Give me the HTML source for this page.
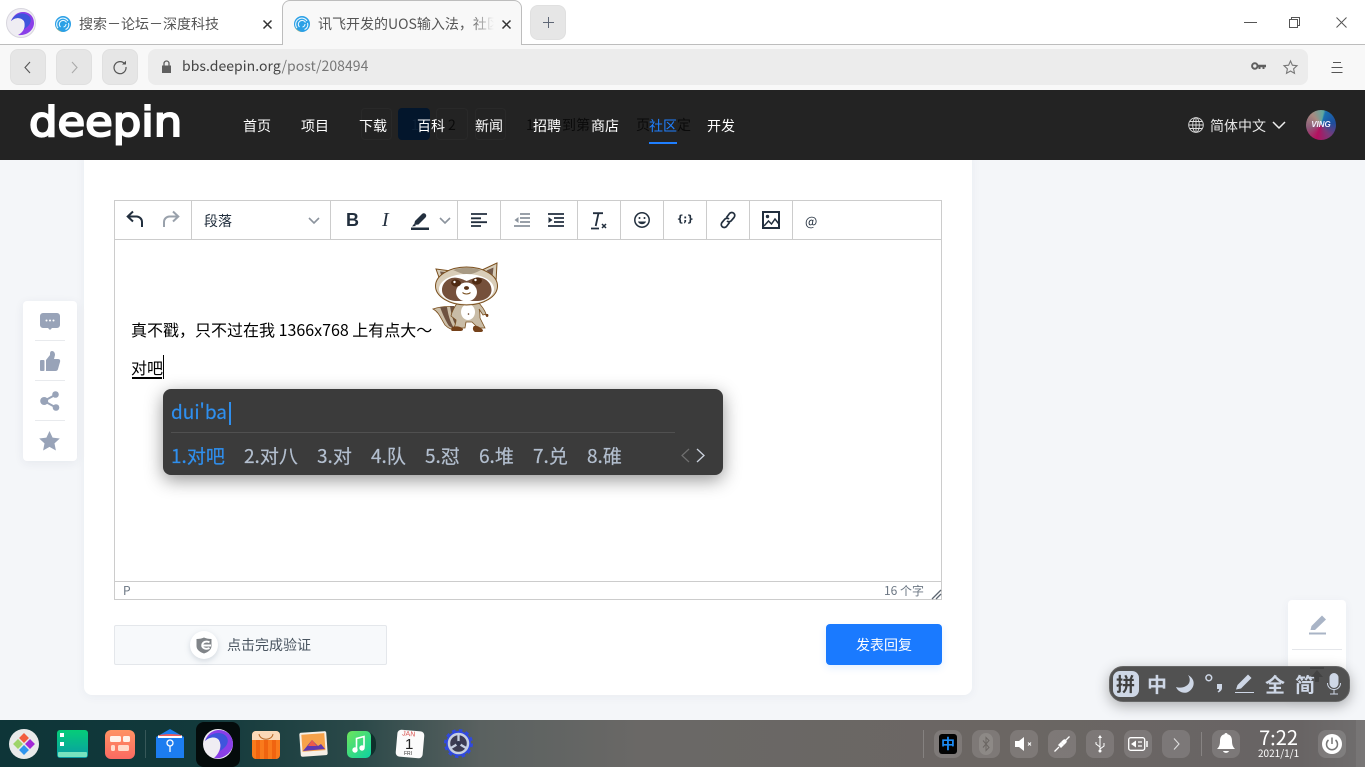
<!DOCTYPE html>
<html lang="zh"><head><meta charset="utf-8"><title>deepin</title>
<style>
*{box-sizing:border-box}
html,body{margin:0;padding:0;width:1365px;height:767px;overflow:hidden;background:#f4f6f9;font-family:"Noto Sans CJK SC","Liberation Sans",sans-serif}
.a{position:absolute}
.t{position:absolute;white-space:nowrap;line-height:20px}
svg{position:absolute;overflow:visible}
.btn{position:absolute;top:49px;width:36px;height:36px;background:#e6e6e6;border:1px solid #e0e0e0;border-radius:8px}
.sep{position:absolute;top:200px;width:1px;height:40px;background:#ccc}
.tb{position:absolute;top:730px;width:28px;height:28px;background:rgba(255,255,255,.13);border-radius:8px}
.nav{position:absolute;top:116px;color:#fff;font-size:14px;line-height:20px;white-space:nowrap}
.cand{position:absolute;top:443px;font-size:19px;line-height:26px;color:#b3bfcf;white-space:nowrap;-webkit-text-stroke:.2px currentColor}
</style></head><body>

<!-- title bar -->
<div class="a" style="left:0;top:0;width:1365px;height:45px;background:#fff;border-bottom:1px solid #bdbdbd"></div>
<!-- browser logo -->
<svg style="left:6px;top:8px" width="30" height="30" viewBox="0 0 30 30"><circle cx="15" cy="15" r="14.500" fill="#efedf3" stroke="#d8d6de"/><path d="M5 13C9 9 15 9 18 13c2 5 0 11-6 14 9 1 16-5 16-12C28 8 23 4 17 4 11 4 7 8 5 13z" fill="#8a3fe8"/><path d="M5 13C9 9 15 9 18 13c1 3 1 5 0 8 6-3 8-8 6-12-4-5-14-6-19 4z" fill="#3f55dc"/></svg>
<!-- tab 1 -->
<svg style="left:55px;top:16px" width="16" height="16" viewBox="0 0 16 16"><circle cx="8" cy="8" r="8" fill="#2ba0e6"/><path d="M3 12a6 6 0 0 1 1-8.500 6 6 0 0 1 9 1.500M5.500 11a3.800 3.800 0 0 1 0-5.500 3.800 3.800 0 0 1 6 1M13.500 7a5 5 0 0 1-3 6.500M11 8a3 3 0 0 1-2.500 3" fill="none" stroke="#e8f6ff" stroke-width="1.100"/><path d="M1 11c1 3 4 5 7 5-3-.5-5-2-7-5z" fill="#f3c64a"/></svg>
<div class="t" style="left:79px;top:14px;font-size:14px;color:#555">搜索－论坛－深度科技</div>
<svg style="left:263px;top:20px" width="9" height="9"><path d="M.5.5l8 8M8.500 .5l-8 8" stroke="#333" stroke-width="1.500"/></svg>
<!-- active tab -->
<div class="a" style="left:282px;top:0;width:240px;height:46px;background:#f8f8f8;border:1px solid #bdbdbd;border-bottom:none;border-radius:8px 8px 0 0"></div>
<svg style="left:294px;top:16px" width="16" height="16" viewBox="0 0 16 16"><circle cx="8" cy="8" r="8" fill="#2ba0e6"/><path d="M3 12a6 6 0 0 1 1-8.500 6 6 0 0 1 9 1.500M5.500 11a3.800 3.800 0 0 1 0-5.500 3.800 3.800 0 0 1 6 1M13.500 7a5 5 0 0 1-3 6.500M11 8a3 3 0 0 1-2.500 3" fill="none" stroke="#e8f6ff" stroke-width="1.100"/><path d="M1 11c1 3 4 5 7 5-3-.5-5-2-7-5z" fill="#f3c64a"/></svg>
<div class="a" style="left:318px;top:14px;width:176px;height:20px;overflow:hidden"><div class="t" style="left:0;top:0;font-size:14px;color:#555">讯飞开发的UOS输入法，社区</div><div class="a" style="right:0;top:0;width:24px;height:20px;background:linear-gradient(90deg,rgba(248,248,248,0),#f8f8f8)"></div></div>
<svg style="left:502px;top:20px" width="9" height="9"><path d="M.5.5l8 8M8.500 .5l-8 8" stroke="#333" stroke-width="1.500"/></svg>
<!-- new tab -->
<div class="a" style="left:530px;top:5px;width:36px;height:35px;background:#e6e6e6;border:1px solid #e0e0e0;border-radius:8px"></div>
<svg style="left:543px;top:17px" width="11" height="11"><path d="M5.500 0v11M0 5.500h11" stroke="#5e6675" stroke-width="1"/></svg>
<!-- window controls -->
<svg style="left:1244px;top:22px" width="13" height="2"><path d="M0 .5h13" stroke="#555"/></svg>
<svg style="left:1289px;top:17px" width="11" height="11"><path d="M.5 2.500h8v8h-8zM2.500 2.500V.5h8v8h-2" fill="none" stroke="#555"/></svg>
<svg style="left:1336px;top:17px" width="11" height="11"><path d="M.5.500l10 10M10.500.500l-10 10" stroke="#555"/></svg>

<!-- toolbar -->
<div class="a" style="left:0;top:45px;width:1365px;height:45px;background:#f8f8f8"></div>
<div class="btn" style="left:10px"></div>
<svg style="left:24px;top:61px" width="7" height="13"><path d="M6 1L1 6.500 6 12" fill="none" stroke="#555" stroke-width="1.100"/></svg>
<div class="btn" style="left:56px"></div>
<svg style="left:71px;top:61px" width="7" height="13"><path d="M1 1l5 5.500L1 12" fill="none" stroke="#aaa" stroke-width="1.100"/></svg>
<div class="btn" style="left:102px"></div>
<svg style="left:113px;top:60px" width="14" height="14" viewBox="0 0 14 14"><path d="M11.800 4A6 6 0 1 0 13 7" fill="none" stroke="#555" stroke-width="1.200"/><path d="M9 4.500h4V.8z" fill="#555"/></svg>
<div class="a" style="left:148px;top:49px;width:1160px;height:36px;background:#ececec;border-radius:8px"></div>
<svg style="left:162px;top:60px" width="9" height="13" viewBox="0 0 9 13"><path d="M0 5.500h9V13H0z" fill="#5f5f5f"/><path d="M2 6V3.500a2.500 2.500 0 0 1 5 0V6" fill="none" stroke="#5f5f5f" stroke-width="1.300"/></svg>
<div class="t" style="left:182px;top:56px;font-size:14px;color:#444;letter-spacing:.04px">bbs.deepin.org<span style="color:#777">/post/208494</span></div>
<svg style="left:1251px;top:62px" width="15" height="9" viewBox="0 0 15 9"><circle cx="3.800" cy="4" r="2.700" fill="none" stroke="#5f5f5f" stroke-width="2"/><path d="M6 2.800h9v2.400h-1.500V7h-2V5.200H9.500V7h-2V5.200H6z" fill="#5f5f5f"/></svg>
<svg style="left:1283px;top:60px" width="15" height="15" viewBox="0 0 15 15"><path d="M7.500 1l1.900 4.200 4.600.5-3.400 3.100.9 4.500-4-2.300-4 2.300.9-4.500L1 5.700l4.600-.5z" fill="none" stroke="#777" stroke-width="1.100"/></svg>
<svg style="left:1331px;top:62px" width="12" height="12"><path d="M2 .5h8M.5 5.500h11M.5 10.500h11" stroke="#555"/></svg>

<!-- page card -->
<div class="a" style="left:84px;top:150px;width:888px;height:545px;background:#fff;border-radius:8px;box-shadow:0 2px 10px rgba(40,60,90,.05)"></div>

<!-- site header -->
<div class="a" style="left:0;top:90px;width:1365px;height:70px;background:#232323"></div>
<div class="a" style="left:398px;top:108px;width:32px;height:32px;border-radius:4px;background:#03162c"></div>
<div class="a" style="left:361px;top:108px;width:31px;height:32px;border:1px solid #292929;border-radius:4px"></div>
<div class="a" style="left:436px;top:108px;width:32px;height:32px;border:1px solid #292929;border-radius:4px"></div>
<div class="a" style="left:475px;top:108px;width:31px;height:32px;border:1px solid #292929;border-radius:4px"></div>
<div class="t" style="left:411px;top:115px;font-size:14px;color:#0c2036">1</div>
<div class="t" style="left:448px;top:115px;font-size:14px;color:#0a0a0a">2</div>
<div class="t" style="left:526px;top:115px;font-size:14px;color:#0a0a0a">1</div>
<div class="t" style="left:562px;top:115px;font-size:14px;color:#0a0a0a">到第</div>
<div class="t" style="left:636px;top:115px;font-size:14px;color:#0a0a0a">页</div>
<div class="t" style="left:677px;top:115px;font-size:14px;color:#0a0a0a">定</div>
<div class="t" style="left:29px;top:97px;font-size:41px;line-height:50px;color:#fff;font-family:'DejaVu Sans',sans-serif;-webkit-text-stroke:2px #fff;transform-origin:0 50%;transform:scaleX(1.095)">deepin</div>
<div class="nav" style="left:243px">首页</div>
<div class="nav" style="left:301px">项目</div>
<div class="nav" style="left:359px">下载</div>
<div class="nav" style="left:417px">百科</div>
<div class="nav" style="left:475px">新闻</div>
<div class="nav" style="left:533px">招聘</div>
<div class="nav" style="left:591px">商店</div>
<div class="nav" style="left:649px;color:#1f7fff">社区</div>
<div class="nav" style="left:707px">开发</div>
<div class="a" style="left:649px;top:142px;width:28px;height:2px;background:#1f7fff"></div>
<svg style="left:1188px;top:117px" width="16" height="16" viewBox="0 0 16 16" fill="none" stroke="#ddd" stroke-width=".9"><circle cx="8" cy="8" r="7.300"/><ellipse cx="8" cy="8" rx="3.300" ry="7.300"/><path d="M8 .7v14.600M.7 8h14.600M1.800 4.500h12.400M1.800 11.500h12.400"/></svg>
<div class="t" style="left:1210px;top:116px;font-size:14px;color:#e8e8e8">简体中文</div>
<svg style="left:1272px;top:121px" width="14" height="9"><path d="M1 1l6 6 6-6" fill="none" stroke="#eee" stroke-width="1.500"/></svg>
<div class="a" style="left:1306px;top:110px;width:30px;height:30px;border-radius:50%;background:conic-gradient(from 20deg,#1a6fb0,#1d4e9e 60deg,#7a3a7a 120deg,#b5105f 180deg,#8c5d7a 240deg,#a88a80 300deg,#5fa8a0 350deg,#1a6fb0)"></div>
<div class="t" style="left:1306px;top:115px;width:30px;text-align:center;font-size:8px;font-style:italic;font-weight:700;color:#f3eefc;font-family:'Liberation Sans',sans-serif">VING</div>

<!-- editor -->
<div class="a" style="left:114px;top:200px;width:828px;height:400px;background:#fff;border:1px solid #ccc"></div>
<div class="a" style="left:114px;top:239px;width:828px;height:1px;background:#ccc"></div>
<div class="a" style="left:114px;top:581px;width:828px;height:1px;background:#ccc"></div>
<div class="sep" style="left:191px"></div><div class="sep" style="left:330px"></div><div class="sep" style="left:457px"></div><div class="sep" style="left:500px"></div><div class="sep" style="left:577px"></div><div class="sep" style="left:620px"></div><div class="sep" style="left:663px"></div><div class="sep" style="left:706px"></div><div class="sep" style="left:749px"></div><div class="sep" style="left:792px"></div>

<svg style="left:126px;top:210px" width="18" height="20" viewBox="0 0 18 20"><path d="M7 1.500L1.700 6.500 7 11.500" fill="none" stroke="#222f3e" stroke-width="2"/><path d="M2 6.500h8.500a5.500 5.500 0 0 1 5.500 5.500v5" fill="none" stroke="#222f3e" stroke-width="2"/></svg>
<svg style="left:162px;top:210px" width="18" height="20" viewBox="0 0 18 20"><path d="M11 1.500l5.300 5-5.300 5" fill="none" stroke="#99a1ab" stroke-width="2"/><path d="M16 6.500H7.500A5.500 5.500 0 0 0 2 12v5" fill="none" stroke="#99a1ab" stroke-width="2"/></svg>
<div class="t" style="left:204px;top:211px;font-size:14px;color:#222f3e">段落</div>
<svg style="left:308px;top:217px" width="12" height="8"><path d="M1 1l5 5 5-5" fill="none" stroke="#8b939d" stroke-width="1.600"/></svg>
<div class="t" style="left:346px;top:210px;font-size:18px;font-weight:700;color:#222f3e;font-family:'Liberation Sans',sans-serif">B</div>
<div class="t" style="left:382px;top:210px;font-size:20px;font-style:italic;color:#222f3e;font-family:'Liberation Serif',serif">I</div>
<svg style="left:411px;top:212px" width="18" height="18" viewBox="0 0 18 18"><path d="M0 15.500h18V18H0z" fill="#222f3e"/><path d="M3 13l1-4 7-7c1-1 2.500-1 3.500 0s1 2.500 0 3.500l-7 7z" fill="#222f3e"/><path d="M1 14.500L3 12l2 2z" fill="#222f3e"/></svg>
<svg style="left:439px;top:217px" width="12" height="8"><path d="M1 1l5 5 5-5" fill="none" stroke="#8b939d" stroke-width="1.600"/></svg>
<svg style="left:471px;top:213px" width="16" height="14"><path d="M0 1h16M0 5.300h10M0 9.200h16M0 13h10" stroke="#222f3e" stroke-width="1.800"/></svg>
<svg style="left:514px;top:213px" width="16" height="14"><path d="M6 1h10M6 5h10M6 9h10M0 13h16" stroke="#8b939d" stroke-width="1.700"/><path d="M4.500 4L.5 7l4 3z" fill="#8b939d"/></svg>
<svg style="left:548px;top:213px" width="16" height="14"><path d="M0 1h16M6 5h10M6 9h10M0 13h16" stroke="#222f3e" stroke-width="1.700"/><path d="M.5 4l4 3-4 3z" fill="#222f3e"/></svg>
<svg style="left:591px;top:212px" width="17" height="18" viewBox="0 0 17 18"><path d="M2 1.200h10M7.500 1.200L4.700 14M0 16.500h8" stroke="#222f3e" stroke-width="1.800" fill="none"/><path d="M11 12l4 4M15 12l-4 4" stroke="#222f3e" stroke-width="1.500"/></svg>
<svg style="left:634px;top:212px" width="16" height="16" viewBox="0 0 16 16" fill="none" stroke="#222f3e" stroke-width="1.500"><circle cx="8" cy="8" r="7.200"/><path d="M4 9.500c1 3.500 7 3.500 8 0z" fill="#222f3e" stroke="none"/><circle cx="5.500" cy="6" r="1" fill="#222f3e" stroke="none"/><circle cx="10.500" cy="6" r="1" fill="#222f3e" stroke="none"/></svg>
<div class="t" style="left:676px;top:210px;width:18px;text-align:center;font-size:10px;letter-spacing:-.5px;font-weight:700;color:#222f3e;font-family:'DejaVu Sans',sans-serif">{;}</div>
<svg style="left:719px;top:211px" width="18" height="18" viewBox="0 0 18 18" fill="none" stroke="#222f3e" stroke-width="1.700"><path d="M7.500 6.500l3-4a3 3 0 0 1 4.500 4l-3 3.500c-1 1-3 1-4 0"/><path d="M10.500 11.500l-3 4a3 3 0 0 1-4.500-4l3-3.500c1-1 3-1 4 0"/></svg>
<svg style="left:762px;top:211px" width="18" height="18" viewBox="0 0 18 18"><rect x="1" y="1" width="16" height="16" fill="none" stroke="#222f3e" stroke-width="2"/><circle cx="5.500" cy="5.500" r="1.700" fill="#222f3e"/><path d="M2 15l4.500-5 3 3 3.500-5 3.500 4.500" fill="none" stroke="#222f3e" stroke-width="1.500"/></svg>
<div class="t" style="left:805px;top:211px;font-size:13px;color:#222f3e">@</div>

<div class="t" style="left:131px;top:319px;font-size:16px;color:#000;white-space:pre">真不戳，只不过在我 1366x768 上有点大～</div>
<div class="t" style="left:131px;top:357px;font-size:16px;color:#000">对吧</div>
<div class="a" style="left:132px;top:377px;width:30px;height:2px;background:#000"></div>
<div class="a" style="left:163px;top:355px;width:1px;height:24px;background:#000"></div>

<!-- raccoon -->
<svg style="left:433px;top:262px" width="66" height="71" viewBox="0 0 66 71">
<path d="M23 45C15 44 6 45 0 47c6 3 8 10 12 16 4 4 8 6 13 4 2-6 1-14-2-22z" fill="#cbbda6" stroke="#7a4f1e" stroke-width=".8"/>
<path d="M7 45c2 5 4 11 9 19 2 1 3 2 5 2-4-6-6-14-7-21zM17 44c1 6 2 12 5 18l2-1c-1-6-1-12-3-17z" fill="#6e5240"/>
<path d="M25 40c-3 4-6 9-7 14l5 4c0 3-1 5-2 8l11 0 1-6 6 0 6 6h7l-5-10c0-4 0-7-1-9l4 6 3-1c-2-6-6-10-9-13z" fill="#c9bca6" stroke="#7a4f1e" stroke-width=".8"/>
<ellipse cx="35" cy="50" rx="7" ry="8" fill="#fff"/><circle cx="35.500" cy="52" r=".8" fill="#5a3216"/>
<path d="M19 65c3-1 9-1 11 2 0 1.500-1 2-3 2h-8c-1 0-1-3 0-4zM41 64c3-1 6 1 9 4 0 1.500-1 2-2 2h-6c-2-1-3-4-1-6z" fill="#75421b"/>
<path d="M52 52c1 2 1 3 2 3s2-1 1-3z" fill="#75421b"/>
<path d="M3 7l15 2-10 12z" fill="#d7cdb9" stroke="#7a4f1e"/><path d="M7 9.500l6 .5-4 6z" fill="#73594a"/>
<path d="M64 1L49 8l14 12z" fill="#d7cdb9" stroke="#7a4f1e"/><path d="M60.500 5.500l-7 3 6 6z" fill="#73594a"/>
<ellipse cx="33.500" cy="24" rx="31" ry="19" fill="#d9cdb8" stroke="#7a4f1e"/>
<path d="M20 8c8-3 20-3 28 0-4 2-8 4-14 5-5-1-9-3-14-5z" fill="#a89a84"/>
<ellipse cx="33.500" cy="27" rx="27.500" ry="15" fill="#fff"/>
<path d="M9 28c0-8 8-14 16-12 5 1 8 3 8.500 3 1 0 4-2 9-3 8-2 16 4 16 12 0 7-7 11-15 11H24c-8 0-15-4-15-11z" fill="#75503b"/>
<ellipse cx="33.500" cy="30" rx="10.500" ry="9.500" fill="#fff"/>
<ellipse cx="23" cy="21" rx="5" ry="3.500" fill="#4f2a12" transform="rotate(10 23 21)"/><ellipse cx="44" cy="19" rx="5" ry="3.500" fill="#4f2a12" transform="rotate(-10 44 19)"/>
<circle cx="21.500" cy="20" r="1.200" fill="#fff"/><circle cx="42.500" cy="18" r="1.200" fill="#fff"/>
<ellipse cx="33.500" cy="26" rx="2.500" ry="1.900" fill="#5a3216"/>
<path d="M29.500 30.500c2 2 6 2 8 0" fill="none" stroke="#7a4f1e"/>
</svg>

<!-- status bar of editor -->
<div class="t" style="left:123px;top:582px;font-size:12px;line-height:18px;color:#6b7683">P</div>
<div class="t" style="left:884px;top:582px;font-size:12px;line-height:18px;color:#6b7683">16 个字</div>
<svg style="left:932px;top:590px" width="9" height="9"><path d="M0 9L9 0M4 9l5-5" stroke="#5d6671" stroke-width="1.300"/></svg>

<!-- captcha -->
<div class="a" style="left:114px;top:625px;width:273px;height:40px;background:#f7f9fb;border:1px solid #e4e7eb;border-radius:2px"></div>
<div class="a" style="left:190px;top:631px;width:28px;height:28px;background:#fff;border-radius:50%;box-shadow:0 2px 6px rgba(100,120,140,.25)"></div>
<svg style="left:196px;top:637px" width="16" height="17" viewBox="0 0 16 17"><path d="M.5 2C3.500 2 6 1.500 8 .5c2 1 4.500 1.500 7.500 1.500v7c0 3.500-3 6-7.500 7.500C3.500 15 .5 12.500.5 9z" fill="#808488"/><path d="M6.500 8.500h8.500M13.500 5.300C10.500 3.700 6.800 4.700 6.200 8c-.3 3.200 3.800 4.800 7.300 3" fill="none" stroke="#fff" stroke-width="1.900"/></svg>
<div class="t" style="left:227px;top:635px;font-size:14px;color:#4a5560">点击完成验证</div>

<!-- submit -->
<div class="a" style="left:826px;top:624px;width:116px;height:41px;background:#1a7aff;border-radius:4px;box-shadow:0 3px 8px rgba(26,122,255,.12)"></div>
<div class="t" style="left:826px;top:635px;width:116px;text-align:center;font-size:14px;color:#fff">发表回复</div>

<!-- left float -->
<div class="a" style="left:23px;top:301px;width:54px;height:160px;background:#fff;border-radius:4px;box-shadow:0 2px 10px rgba(40,60,90,.07)"></div>
<div class="a" style="left:35px;top:340px;width:30px;height:1px;background:#e8eaed"></div>
<div class="a" style="left:35px;top:380px;width:30px;height:1px;background:#e8eaed"></div>
<div class="a" style="left:35px;top:420px;width:30px;height:1px;background:#e8eaed"></div>
<svg style="left:40px;top:313px" width="20" height="17" viewBox="0 0 20 17"><path d="M3 0h14a3 3 0 0 1 3 3v9a3 3 0 0 1-3 3h-5l-2 2-2-2H3a3 3 0 0 1-3-3V3a3 3 0 0 1 3-3z" fill="#98a3b8"/><circle cx="6.500" cy="7.500" r="1" fill="#fff"/><circle cx="10" cy="7.500" r="1" fill="#fff"/><circle cx="13.500" cy="7.500" r="1" fill="#fff"/></svg>
<svg style="left:40px;top:351px" width="20" height="20" viewBox="0 0 20 20"><rect x="0" y="9" width="4.500" height="11" rx="1" fill="#98a3b8"/><path d="M6 9l4-5c0-2 0-4 2-4s3 2 3 4l-1 4h4c2 0 2.500 1.500 2 3l-2 7c-.3 1.300-1.200 2-2.500 2H6z" fill="#98a3b8"/></svg>
<svg style="left:40px;top:391px" width="20" height="20" viewBox="0 0 20 20"><path d="M15 4L4 10l11 6" fill="none" stroke="#98a3b8" stroke-width="2"/><circle cx="15.500" cy="3.500" r="3.300" fill="#98a3b8"/><circle cx="4.200" cy="10" r="4" fill="#98a3b8"/><circle cx="16" cy="16.500" r="3.300" fill="#98a3b8"/></svg>
<svg style="left:39px;top:431px" width="21" height="20" viewBox="0 0 21 20"><path d="M10.500 0l3.100 6.600 7.200.9-5.300 4.900 1.400 7.100-6.400-3.600-6.400 3.600 1.400-7.100L.2 7.500l7.200-.9z" fill="#98a3b8"/></svg>

<!-- right float -->
<div class="a" style="left:1288px;top:600px;width:58px;height:100px;background:#fff;border-radius:4px;box-shadow:0 2px 10px rgba(40,60,90,.05)"></div>
<div class="a" style="left:1292px;top:649px;width:50px;height:1px;background:#e4e6ea"></div>
<svg style="left:1309px;top:615px" width="18" height="20" viewBox="0 0 18 20"><path d="M0 17.500h17V19.500H0z" fill="#a9b4c6"/><path d="M1.500 15l1-4L13 .5 17 4.500 6 15z" fill="#a9b4c6"/></svg>

<!-- IME candidate -->
<div class="a" style="left:163px;top:389px;width:560px;height:86px;background:#3b3b3b;border-radius:8px;box-shadow:0 5px 18px rgba(0,0,0,.42)"></div>
<div class="t" style="left:171px;top:399px;font-size:19px;line-height:26px;color:#2f8fee;-webkit-text-stroke:.2px #2f8fee">dui'ba</div>
<div class="a" style="left:229px;top:402px;width:1.500px;height:23px;background:#2f8fee"></div>
<div class="a" style="left:171px;top:432px;width:504px;height:1px;background:#505050"></div>
<div class="cand" style="left:171px;color:#2f8fee">1.对吧</div>
<div class="cand" style="left:244px">2.对八</div>
<div class="cand" style="left:317px">3.对</div>
<div class="cand" style="left:371px">4.队</div>
<div class="cand" style="left:425px">5.怼</div>
<div class="cand" style="left:479px">6.堆</div>
<div class="cand" style="left:533px">7.兑</div>
<div class="cand" style="left:587px">8.碓</div>
<svg style="left:681px;top:448px" width="9" height="15"><path d="M8 1L1 7.500 8 14" fill="none" stroke="#6f6f6f" stroke-width="1.200"/></svg>
<svg style="left:696px;top:448px" width="9" height="15"><path d="M1 1l7 6.500L1 14" fill="none" stroke="#ccd3de" stroke-width="1.300"/></svg>

<!-- IME status -->
<div class="a" style="left:1109px;top:666px;width:241px;height:36px;background:rgba(72,72,72,.95);border:1px solid #666;border-radius:14px;box-shadow:0 4px 14px rgba(0,0,0,.3)"></div>
<div class="a" style="left:1113px;top:671px;width:26px;height:26px;background:#ced7e6;border-radius:7px"></div>
<div class="t" style="left:1116px;top:674px;font-size:19px;font-weight:700;color:#3e3e3e;line-height:20px">拼</div>
<div class="t" style="left:1147px;top:674px;font-size:20px;font-weight:700;color:#ced7e6;line-height:20px">中</div>
<svg style="left:1176px;top:675px" width="19" height="19" viewBox="0 0 19 19"><path d="M12 0c3 4 2 9-2 11-3 2-7 2-10 1 2 5 8 7 12 5 6-3 9-12 0-17z" fill="#ced7e6"/></svg>
<svg style="left:1205px;top:674px" width="20" height="20" viewBox="0 0 20 20"><circle cx="3.800" cy="3.800" r="2.900" fill="none" stroke="#ced7e6" stroke-width="1.500"/><path d="M12 10h5v4c0 2-1.500 3.500-3.500 4.500l-1-1c1-.5 1.500-1 1.500-2.500H12z" fill="#ced7e6"/></svg>
<svg style="left:1235px;top:674px" width="19" height="19" viewBox="0 0 19 19"><path d="M0 18h19v1H0z" fill="#ced7e6"/><path d="M1 15.500l1.500-4.500L13 .5 16.500 4 6 14.500z" fill="#ced7e6"/></svg>
<div class="t" style="left:1265px;top:674px;font-size:20px;font-weight:700;color:#ced7e6;line-height:20px">全</div>
<div class="t" style="left:1295px;top:674px;font-size:20px;font-weight:700;color:#ced7e6;line-height:20px">简</div>
<svg style="left:1327px;top:673px" width="14" height="22" viewBox="0 0 14 22"><rect x="2.500" y="0" width="9" height="15" rx="4.500" fill="#ced7e6"/><path d="M.5 10c0 4 3 6.500 6.500 6.500s6.500-2.500 6.500-6.500M7 16.500V21M3 21h8" fill="none" stroke="#ced7e6" stroke-width="1"/></svg>
<svg style="left:1309px;top:666px" width="16" height="17" viewBox="0 0 16 17"><path d="M1 1h14v2H1zM8 4l6 7H10v5H6v-5H2z" fill="#3e3e3e" opacity=".75"/></svg>

<!-- dock -->
<div class="a" style="left:0;top:720px;width:1365px;height:47px;background:linear-gradient(90deg,#0e3538 0,#12393b 200px,#2b4949 360px,#5a6160 480px,#6a6866 640px,#6b6663 1000px,#686464 1300px,#706e6e 1365px)"></div>
<div class="a" style="left:196px;top:722px;width:44px;height:45px;background:#040b0b;border-radius:8px"></div>
<svg style="left:9px;top:729px" width="30" height="30" viewBox="0 0 30 30"><circle cx="15" cy="15" r="15" fill="#e9eaea"/><rect x="11.500" y="5.500" width="7" height="7" transform="rotate(45 15 9)" fill="#f25d3f"/><rect x="5.500" y="11.500" width="7" height="7" transform="rotate(45 9 15)" fill="#9ed46a"/><rect x="17.500" y="11.500" width="7" height="7" transform="rotate(45 21 15)" fill="#a327d6"/><rect x="11.500" y="17.500" width="7" height="7" transform="rotate(45 15 21)" fill="#2f95ee"/></svg>
<div class="a" style="left:57px;top:730px;width:31px;height:28px;border-radius:3px;background:linear-gradient(180deg,#05cd78,#0a9ca6)"></div>
<div class="a" style="left:58px;top:752px;width:29px;height:5px;background:#78e3bf;border-radius:1px"></div>
<div class="a" style="left:60px;top:733px;width:4px;height:4px;background:#fff"></div>
<div class="a" style="left:60px;top:742px;width:4px;height:4px;background:#fff"></div>
<div class="a" style="left:105px;top:730px;width:30px;height:29px;border-radius:6px;background:linear-gradient(180deg,#ff9263,#fb6a62)"></div>
<div class="a" style="left:110px;top:736px;width:11px;height:6px;background:#fff2ea;border-radius:1.500px"></div>
<div class="a" style="left:123px;top:736px;width:7px;height:6px;background:#fff2ea;border-radius:1.500px"></div>
<div class="a" style="left:111px;top:745px;width:4px;height:6px;background:#ffdccc;border-radius:1.500px"></div>
<div class="a" style="left:118px;top:745px;width:11px;height:6px;background:#ffdccc;border-radius:1.500px"></div>
<div class="a" style="left:145px;top:730px;width:1px;height:28px;background:rgba(255,255,255,.16)"></div>
<svg style="left:156px;top:729px" width="28" height="29" viewBox="0 0 28 29"><path d="M0 8L14 0l14 8v21H0z" fill="#1c7df0"/><path d="M2 6.500C10 5 18 5 26 6.500V9H2z" fill="#fff"/><path d="M3 6C10 4.800 18 4.800 25 6v1H3z" fill="#f15b5b"/><circle cx="14" cy="14" r="3" fill="none" stroke="#fff" stroke-width="1.300"/><path d="M14 17v6" stroke="#fff" stroke-width="1.300"/></svg>
<svg style="left:203px;top:729px" width="30" height="30" viewBox="0 0 30 30"><circle cx="15" cy="15" r="15" fill="#efedf3"/><path d="M2 12C6 7 13 7 16 11c3 5 1 13-5 18 9 2 19-6 19-14C30 7 24 1 16 1 9 1 4 6 2 12z" fill="#8a3fe8"/><path d="M2 12C6 8 13 7 16 11c2 4 2 7 1 11 7-4 10-10 6-15C18 2 7 3 2 12z" fill="#3f55dc"/></svg>
<div class="a" style="left:252px;top:731px;width:28px;height:28px;border-radius:4px;background:repeating-linear-gradient(90deg,#f97a1c 0 4px,#f06410 4px 8px)"></div>
<div class="a" style="left:252px;top:731px;width:28px;height:9px;border-radius:4px 4px 0 0;background:#fbd9b8"></div>
<svg style="left:258px;top:733px" width="16" height="8"><path d="M1 1c1 7 13 7 14 0" fill="none" stroke="#b96a2a"/></svg>
<svg style="left:300px;top:731px" width="27" height="26" viewBox="0 0 27 26"><rect x="0" y="1" width="27" height="24" rx="2" transform="rotate(-4 13 13)" fill="#f6efe6"/><rect x="2" y="3" width="23" height="17" transform="rotate(-4 13 13)" fill="#f7a24a"/><path d="M3 20l9-11 6 6 3-2 4 5z" fill="#6139ad"/><path d="M8 15l4-6 5 6z" fill="#ee5a4a"/></svg>
<div class="a" style="left:347px;top:731px;width:29px;height:27px;border-radius:5px 12px 12px 5px;background:#0f2f2c"></div>
<div class="a" style="left:347px;top:731px;width:24px;height:27px;border-radius:5px;background:linear-gradient(135deg,#6ee55b,#0cd2a2)"></div>
<svg style="left:352px;top:735px" width="14" height="19"><path d="M4.500 14V3.500L12 1.500v11" fill="none" stroke="#fff" stroke-width="1.600"/><circle cx="3" cy="15" r="2.700" fill="#fff"/><circle cx="10" cy="13" r="2.700" fill="#fff"/></svg>
<svg style="left:395px;top:729px" width="30" height="30" viewBox="0 0 30 30"><rect x="1.500" y="1.500" width="27" height="27" rx="4" transform="rotate(5 15 15)" fill="#fbfbfb"/></svg>
<div class="t" style="left:402px;top:731px;font-size:7px;line-height:8px;color:#d9534f;font-family:'Liberation Sans',sans-serif;transform:rotate(5deg)">JAN</div>
<div class="t" style="left:405px;top:737px;font-size:15px;line-height:15px;color:#222;font-family:'Liberation Sans',sans-serif">1</div>
<div class="t" style="left:404px;top:751px;font-size:5px;line-height:7px;color:#333;font-family:'Liberation Sans',sans-serif">FRI</div>
<svg style="left:444px;top:729px" width="29" height="29" viewBox="0 0 29 29"><circle cx="14.500" cy="14.500" r="12.500" fill="#3049e0"/><circle cx="14.500" cy="14.500" r="13" fill="none" stroke="#3049e0" stroke-width="3" stroke-dasharray="3.500 3.300"/><circle cx="14.500" cy="14.500" r="9.500" fill="#3d3c52" stroke="#c7cfe0" stroke-width="2.500"/><path d="M14.500 14.500V5M14.500 14.500l-8.500 5M14.500 14.500l8.500 5" stroke="#c7cfe0" stroke-width="2.300"/><circle cx="14.500" cy="14.500" r="2.500" fill="#33364f"/></svg>

<!-- tray -->
<div class="a" style="left:923px;top:730px;width:1px;height:28px;background:rgba(255,255,255,.18)"></div>
<div class="tb" style="left:934px"></div><div class="tb" style="left:972px"></div><div class="tb" style="left:1010px"></div><div class="tb" style="left:1048px"></div><div class="tb" style="left:1086px"></div><div class="tb" style="left:1124px"></div><div class="tb" style="left:1162px"></div><div class="tb" style="left:1212px"></div><div class="tb" style="left:1318px"></div>
<div class="a" style="left:1201px;top:732px;width:1px;height:24px;background:rgba(255,255,255,.2)"></div>
<div class="a" style="left:939px;top:734px;width:18px;height:20px;background:#030303;border-radius:3px"></div>
<div class="t" style="left:941px;top:734px;font-size:14px;font-weight:700;color:#1c8bf5;line-height:20px">中</div>
<div class="a" style="left:979px;top:733px;width:14px;height:22px;background:#8d8986;border-radius:7px"></div>
<svg style="left:982px;top:737px" width="8" height="14"><path d="M1 3.500l6 7-3 3V.5l3 3-6 7" fill="none" stroke="#6b6663"/></svg>
<svg style="left:1015px;top:737px" width="18" height="14" viewBox="0 0 18 14"><path d="M0 4h4l5-4v14l-5-4H0z" fill="#fff"/><path d="M13 5.500l3 3M16 5.500l-3 3" stroke="#fff"/></svg>
<svg style="left:1054px;top:736px" width="16" height="16" viewBox="0 0 16 16"><path d="M.5 15.500L5 11M15.500.5L11 5" stroke="#fff" stroke-width="1.300"/><path d="M4 9l3-3 3 3-3 3z" fill="#fff"/><path d="M7 6l2-2c1-1 2-1 3 0s1 2 0 3l-2 2z" fill="#fff"/></svg>
<svg style="left:1095px;top:735px" width="10" height="18" viewBox="0 0 10 18"><path d="M5 1.500V17M5 12L1 9V7M5 14l4-3V8" fill="none" stroke="#fff" stroke-width="1"/><path d="M5 0l2 3H3z" fill="#fff"/><circle cx="5" cy="16" r="1.500" fill="#fff"/></svg>
<svg style="left:1128px;top:737px" width="21" height="14" viewBox="0 0 21 14"><rect x=".7" y=".7" width="16" height="12.600" rx="2" fill="none" stroke="#fff" stroke-width="1.300"/><path d="M3 7l5-3.500v7zM8 7h-4" fill="#fff"/><path d="M10 5h4M10 9h4" stroke="#fff" stroke-width="1.300"/><path d="M19 4v6" stroke="#fff" stroke-width="1.500"/></svg>
<svg style="left:1173px;top:738px" width="7" height="12"><path d="M1 .5L6 6l-5 5.500" fill="none" stroke="#ddd" stroke-width="1.100"/></svg>
<svg style="left:1217px;top:733px" width="18" height="21" viewBox="0 0 18 21"><path d="M9 0c1 0 1.500.5 1.500 1.300C14 2 15 5 15 8c0 4 1 6 3 8H0c2-2 3-4 3-8 0-3 1-6 4.500-6.700C7.500.5 8 0 9 0z" fill="#fff"/><path d="M6 18h6c-1 2.500-5 2.500-6 0z" fill="#fff"/></svg>
<div class="t" style="left:1258px;top:724px;width:41px;text-align:center;font-size:20px;line-height:26px;color:#fff">7:22</div>
<div class="t" style="left:1258px;top:746px;width:41px;text-align:center;font-size:10px;line-height:14px;color:#fff">2021/1/1</div>
<svg style="left:1322px;top:734px" width="20" height="20" viewBox="0 0 20 20"><circle cx="10" cy="10" r="10" fill="#fff"/><path d="M6.500 6a5.500 5.500 0 1 0 7 0M10 3.500V10" fill="none" stroke="#777" stroke-width="1.500"/></svg>
<div class="a" style="left:1356px;top:720px;width:9px;height:47px;background:rgba(255,255,255,.06)"></div>
</body></html>
